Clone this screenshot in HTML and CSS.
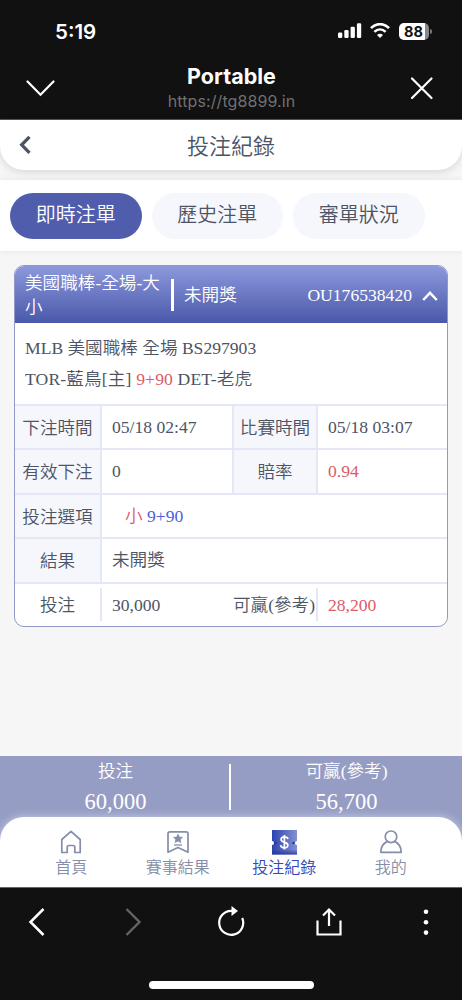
FILE: index.html
```html
<!DOCTYPE html>
<html lang="zh-Hant">
<head>
<meta charset="utf-8">
<meta name="viewport" content="width=device-width, initial-scale=1">
<title>投注紀錄</title>
<link rel="stylesheet" href="styles.css">
</head>
<body>
<div class="screen">
  <header class="browser-top">
    <div class="status">
      <span class="clock">5:19</span>
      <div class="indicators">
        <svg class="signal" width="24" height="16" viewBox="0 0 24 16" fill="#fff"><rect x="0" y="9.5" width="4.3" height="5.5" rx="1.2"/><rect x="6.3" y="7" width="4.3" height="8" rx="1.2"/><rect x="12.6" y="3.7" width="4.3" height="11.3" rx="1.2"/><rect x="18.9" y="0.3" width="4.3" height="14.7" rx="1.2"/></svg>
        <svg class="wifi" width="20" height="16" viewBox="0 0 20 16" fill="none" stroke="#fff" stroke-width="2.7"><path d="M1 5.2C6-.2 14-.2 19 5.2"/><path d="M4.4 8.9c3.3-3.2 7.9-3.2 11.2 0"/><path d="M7 11.9q3-2.4 6 0L10 15z" fill="#fff" stroke="none"/></svg>
        <span class="battery"><span class="level">88</span></span>
      </div>
    </div>
    <div class="address">
      <svg width="30" height="18" viewBox="0 0 30 18" fill="none" stroke="#fff" stroke-width="2.2" stroke-linecap="round"><path d="M1.500 2.500 14.500 15.800 27.500 2.500"/></svg>
      <div class="site"><strong>Portable</strong><span>https://tg8899.in</span></div>
      <svg width="24" height="24" viewBox="0 0 24 24" fill="none" stroke="#fff" stroke-width="2.200" stroke-linecap="round"><path d="m2 2.500 19.500 19.500M21.500 2.500 2 22"/></svg>
    </div>
  </header>

  <main class="page">
    <div class="title-bar">
      <svg width="14" height="20" viewBox="0 0 14 20" fill="none" stroke="#4d5464" stroke-width="3.300"><path d="M11.500 1.800 3.700 9.800l7.800 8"/></svg>
      <h1>投注紀錄</h1>
    </div>
    <nav class="tabs">
      <span class="tab active">即時注單</span>
      <span class="tab">歷史注單</span>
      <span class="tab">審單狀況</span>
    </nav>

    <section class="ticket">
      <div class="ticket-head">
        <div class="kind">美國職棒-全場-大小</div>
        <div class="state">未開獎</div>
        <div class="number">OU176538420</div>
        <svg width="16" height="12" viewBox="0 0 16 12" fill="none" stroke="#fff" stroke-width="2.500"><path d="M1.200 11 8 3.800 14.800 11"/></svg>
      </div>
      <div class="match">
        <p>MLB 美國職棒 全場 BS297903</p>
        <p class="teams">TOR-藍鳥[主] <em class="red">9+90</em> DET-老虎</p>
      </div>
      <div class="row four"><b>下注時間</b><span>05/18 02:47</span><b>比賽時間</b><span>05/18 03:07</span></div>
      <div class="row four"><b>有效下注</b><span>0</span><b>賠率</b><span class="red">0.94</span></div>
      <div class="row"><b>投注選項</b><span class="pick"><em class="red">小</em> <em class="blue">9+90</em></span></div>
      <div class="row"><b>結果</b><span>未開獎</span></div>
      <div class="row four totals"><b>投注</b><span>30,000</span><b>可贏(參考)</b><span class="red">28,200</span></div>
    </section>
  </main>

  <section class="summary">
    <div><span>投注</span><strong>60,000</strong></div>
    <div><span>可贏(參考)</span><strong>56,700</strong></div>
  </section>
  <nav class="app-nav">
    <div class="item">
      <svg width="26" height="26" viewBox="0 0 26 26" fill="none" stroke="#848ea8" stroke-width="1.700" stroke-linejoin="round"><path d="M3.800 10.500 13 2.300l9.200 8.200v13h-5.400v-5.300q0-1.700-1.700-1.700h-4.200q-1.700 0-1.700 1.700v5.300H3.800z"/></svg>
      <span>首頁</span>
    </div>
    <div class="item">
      <svg width="26" height="26" viewBox="0 0 26 26" fill="none" stroke="#848ea8" stroke-width="1.700" stroke-linejoin="round"><path d="M5 2.800h16q2 0 2 2v18.400l-10-4.700-10 4.700V4.800q0-2 2-2z"/><path d="m13 5.200 1.300 2.900 3.100.3-2.300 2.100.7 3-2.800-1.600-2.800 1.600.7-3-2.300-2.100 3.100-.3z" fill="#848ea8" stroke-width=".8"/><path d="M9 16h8" stroke-width="1.300"/></svg>
      <span>賽事結果</span>
    </div>
    <div class="item current">
      <svg width="26" height="26" viewBox="0 0 26 26"><defs><linearGradient id="ticket"><stop stop-color="#2e43b1"/><stop offset="1" stop-color="#8290d2"/></linearGradient><linearGradient id="fold" x1="0" y1="0" x2="0" y2="1"><stop offset=".4" stop-color="#24378f" stop-opacity="0"/><stop offset="1" stop-color="#24378f" stop-opacity=".8"/></linearGradient></defs><path d="M1 1h25v11a2 2 0 0 0 0 4v9.500H1V16a2 2 0 0 0 0-4z" fill="url(#ticket)"/><path d="M1 17h25v8.500H1z" fill="url(#fold)"/><circle cx="4.500" cy="14" r="1.200" fill="#24378f"/><circle cx="22.500" cy="14" r="1.200" fill="#24378f"/><path d="M17 10c-.5-1.600-1.800-2.200-3.500-2.200-4.300 0-4.600 4.400-.5 5.300 5.200 1 5 5.700.4 5.700-2.200 0-3.500-.9-3.900-2.700M13.400 6v14.600" fill="none" stroke="#fff" stroke-width="1.700"/></svg>
      <span>投注紀錄</span>
    </div>
    <div class="item">
      <svg width="26" height="26" viewBox="0 0 26 26" fill="none" stroke="#848ea8" stroke-width="1.700" stroke-linejoin="round"><circle cx="13" cy="7.800" r="5.800"/><path d="M9.400 12.400C5.400 14.200 2.800 18 2.800 23.300h20.400c0-5.300-2.600-9.100-6.600-10.900"/></svg>
      <span>我的</span>
    </div>
  </nav>

  <footer class="browser-bottom">
    <div class="tools">
      <svg width="30" height="32" viewBox="0 0 30 32" fill="none" stroke="#fff" stroke-width="2.500"><path d="M22.500 3 9.500 16l13 13"/></svg>
      <svg width="30" height="32" viewBox="0 0 30 32" fill="none" stroke="#666" stroke-width="2.300"><path d="m7.500 3 13 13-13 13"/></svg>
      <svg width="30" height="32" viewBox="0 0 30 32" fill="none" stroke="#fff" stroke-width="2.200"><path d="M16 4.800h-1a12 12 0 1 0 11.200 7.200"/><path d="m15.500 0 6.500 5-6.500 5z" fill="#fff" stroke="none"/></svg>
      <svg width="30" height="32" viewBox="0 0 30 32" fill="none" stroke="#fff" stroke-width="2.200"><path d="M3.500 14.500V28.500h23v-14M15 20V4M9 9.500l6-6 6 6"/></svg>
      <svg width="30" height="32" viewBox="0 0 30 32" fill="#fff"><circle cx="15" cy="5.700" r="2.300"/><circle cx="15" cy="16.200" r="2.300"/><circle cx="15" cy="26.600" r="2.300"/></svg>
    </div>
    <div class="home-bar"></div>
  </footer>
</div>
</body>
</html>
```

FILE: styles.css
```css
* { box-sizing: border-box; }
body { margin: 0; background: #111; }
h1, p { margin: 0; font-weight: inherit; }
em, b { font-style: normal; font-weight: inherit; }
svg { display: block; flex: none; }

.screen {
  width: 462px;
  height: 1000px;
  display: flex;
  flex-direction: column;
  overflow: hidden;
  background: #f6f6f6;
  color: #4d5464;
  font-family: "Liberation Serif", "Noto Sans CJK TC", serif;
  font-size: 17.600px;
  font-weight: 350;
}

/* browser chrome, top */
.browser-top {
  height: 120px;
  flex: none;
  background: #111;
  border-bottom: 1px solid #555;
  color: #fff;
  font-family: Inter, sans-serif;
}
.status {
  height: 62px;
  display: flex;
  align-items: center;
  justify-content: space-between;
  padding: 0 33.500px 0 55px;
}
.clock { font-size: 20.500px; font-weight: 600; }
.indicators { display: flex; align-items: center; gap: 8px; }
.battery {
  width: 30px;
  height: 17px;
  border-radius: 5px;
  background: linear-gradient(90deg, #fff 88%, #888 88%);
  position: relative;
  margin-left: 1px;
}
.battery::after {
  content: "";
  position: absolute;
  right: -3px;
  top: 6px;
  width: 2px;
  height: 5px;
  border-radius: 0 2px 2px 0;
  background: #777;
}
.level {
  display: block;
  text-align: center;
  font-size: 14.500px;
  font-weight: 700;
  line-height: 17px;
  color: #111;
}
.address {
  height: 52px;
  display: flex;
  align-items: center;
  justify-content: space-between;
  padding: 0 28px 0 26px;
}
.site { display: flex; flex-direction: column; align-items: center; margin: -2px 3px 0 0; }
.site strong { font-size: 21.500px; line-height: 27px; font-weight: 700; }
.site span { font-size: 16px; line-height: 22px; font-weight: 400; color: #707070; letter-spacing: .1px; }

/* page header and tabs */
.page { flex: 1; min-height: 0; }
.title-bar {
  height: 50px;
  display: grid;
  grid-template-columns: 14px 1fr 14px;
  padding: 15px 18px 0 18px;
  background: #fff;
  border-radius: 0 0 24px 24px;
  box-shadow: 0 2px 8px rgba(0, 0, 0, .13);
}
.title-bar h1 { font-size: 22px; line-height: 24px; text-align: center; }
.tabs {
  height: 71px;
  margin-top: 10px;
  padding: 13px 10px;
  display: flex;
  gap: 10px;
  background: #fff;
  box-shadow: 0 0 6px rgba(0, 0, 0, .08);
}
.tab {
  width: 131.500px;
  height: 45.500px;
  border-radius: 23px;
  background: #f6f7fc;
  text-align: center;
  font-size: 20px;
  line-height: 45px;
}
.tab.active { background: #505dad; color: #fff; }

/* ticket card */
.ticket {
  margin: 14px 14px 0;
  height: 362px;
  border: 1.500px solid #9299c8;
  border-radius: 10px;
  background: #fff;
  overflow: hidden;
}
.ticket-head {
  height: 57px;
  display: flex;
  align-items: center;
  padding: 0 9px 0 10px;
  background: linear-gradient(#8d99dc, #4958aa);
  color: #fff;
}
.kind { width: 146px; line-height: 24px; }
.state { border-left: 3px solid #fff; padding-left: 10px; line-height: 32px; }
.number { margin-left: auto; margin-right: 10px; padding-top: 1px; }
.match { height: 81px; padding: 10px 10px 0; }
.match p { line-height: 30.500px; }
.teams { letter-spacing: .15px; }
.red { color: #dc5b68; }
.blue { color: #4b62dc; }
.row {
  height: 44.400px;
  display: grid;
  grid-template-columns: 87px 1fr;
  grid-template-rows: 100%;
  border-top: 2px solid #e4e7f6;
  line-height: 43px;
  white-space: nowrap;
}
.row.four { grid-template-columns: 87px 130px 86px 1fr; }
.row b { text-align: center; background: #f6f7fc; border-right: 2px solid #e4e7f6; padding-top: 1px; line-height: 42px; }
.row span { padding-left: 10px; }
.row span + b { border-left: 2px solid #e4e7f6; }
.row .pick { padding-left: 23px; }
.row.totals span { line-height: 42px; }
.row.totals b { background: none; line-height: 32px; margin: 4px 0 5px; }
.row.totals span + b { border-left: 0; }

/* summary strip above the navigation */
.summary {
  height: 85px;
  margin-bottom: -24px;
  flex: none;
  display: grid;
  grid-template-columns: 1fr 1fr;
  background: #969dc5;
  color: #fff;
  text-align: center;
}
.summary div { display: flex; flex-direction: column; height: 46px; margin-top: 8px; }
.summary div:first-child { border-right: 2px solid #fff; padding-left: 2px; }
.summary span { line-height: 14px; }
.summary strong { font-size: 22.500px; line-height: 28px; margin-top: 10px; font-weight: 400; }
.app-nav {
  height: 70px;
  flex: none;
  position: relative;
  display: grid;
  grid-template-columns: repeat(4, 1fr);
  padding: 12px 18px 0;
  background: #fff;
  border-radius: 24px 24px 0 0;
  box-shadow: 0 0 9px rgba(255, 255, 255, .5);
  color: #848ea8;
}
.item { display: flex; flex-direction: column; align-items: center; font-size: 16px; line-height: 26px; }
.current { color: #3447b4; }

/* browser chrome, bottom */
.browser-bottom { height: 113px; flex: none; position: relative; background: #111; border-top: 1px solid #666; padding: 18px 21px 0; }
.tools { display: flex; justify-content: space-between; }
.home-bar { width: 165px; height: 8px; margin: 43px auto 0; border-radius: 4px; background: #fff; }
```
